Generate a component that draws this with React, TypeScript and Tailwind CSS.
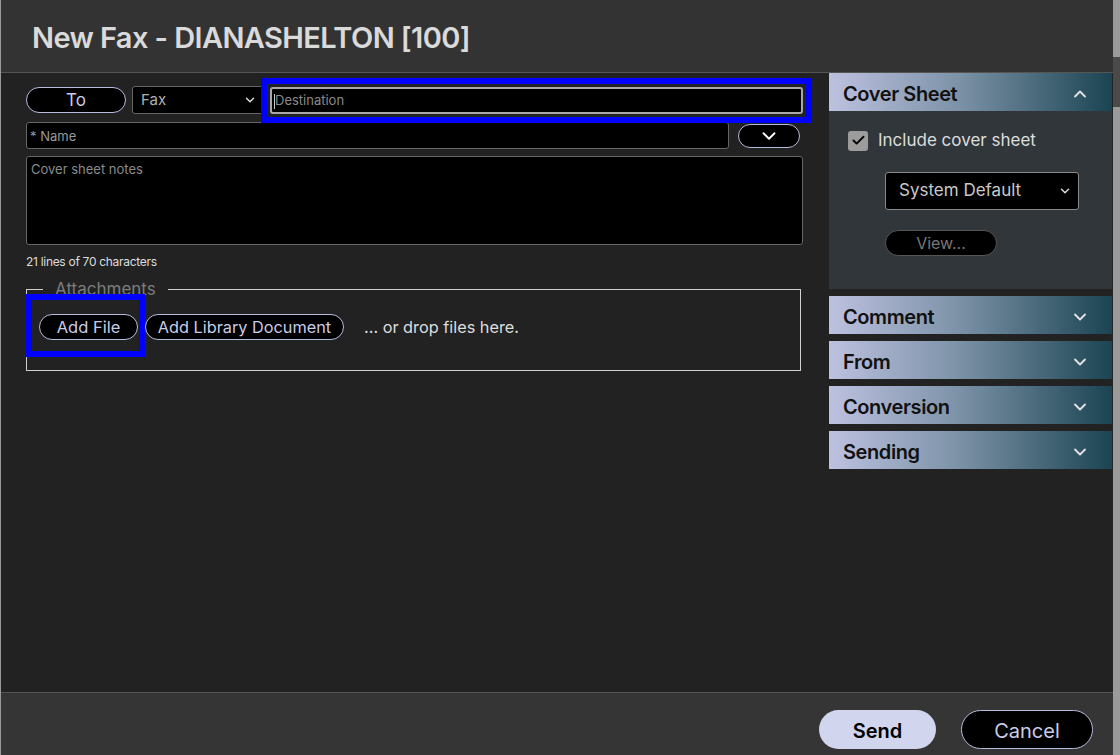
import { ChevronDown, ChevronUp, Check } from "lucide-react";

const sections = ["Comment", "From", "Conversion", "Sending"];

const pill =
  "rounded-full border border-[#b7bbdd] bg-black text-[#c9cce8] leading-none flex items-center justify-center";

function SectionHeader({ label, open }: { label: string; open?: boolean }) {
  return (
    <div className="flex h-[38px] items-center justify-between bg-[linear-gradient(90deg,#bdc1e0_0%,#7d93a8_45%,#1b4452_100%)] pl-[14px] pr-[22px] pt-[3px]">
      <span className="text-[20px] font-semibold tracking-[-0.4px] text-[#111]">{label}</span>
      {open ? (
        <ChevronUp className="h-[20px] w-[20px] text-[#e4e4e4]" strokeWidth={2.2} />
      ) : (
        <ChevronDown className="h-[20px] w-[20px] text-[#e4e4e4]" strokeWidth={2.2} />
      )}
    </div>
  );
}

export default function App() {
  return (
    <div className="flex h-[755px] w-[1120px] overflow-hidden bg-[#222] font-['Inter',sans-serif]">
      <div className="flex flex-1 flex-col border-l border-[#9a9a9a]">
        <header className="flex h-[73px] items-center border-b border-[#555] bg-[#333] pl-[31px] pt-[4px]">
          <h1 className="text-[29px] font-semibold tracking-[-0.6px] text-[#dadada]">
            New Fax - DIANASHELTON [100]
          </h1>
        </header>

        <div className="flex flex-1 pl-[25px]">
          <div className="flex w-[777px] flex-col pt-[13px]">
            <div className="flex h-[28px] items-center gap-[6px]">
              <button className={`${pill} h-[26px] w-[100px] text-[17px]`}>To</button>
              <div className="flex h-[28px] w-[132px] items-center justify-between rounded-[3px] border border-[#666] bg-black pl-[8px] pr-[6px] text-[15px] text-[#b0b0b0]">
                <span>Fax</span>
                <ChevronDown className="h-[14px] w-[14px] text-[#ddd]" strokeWidth={2.5} />
              </div>
              <div className="relative h-[27px] flex-1">
                <div className="absolute -inset-[9px] border-[6px] border-[#0000ff]" />
                <div className="relative flex h-full items-center rounded-[3px] border-2 border-[#a8a8a8] bg-black pl-[2px] pt-[2px] text-[13px] text-[#8a8a8a]">
                  <span className="h-[15px] w-px bg-[#ccc]" />
                  <span>Destination</span>
                </div>
              </div>
            </div>

            <div className="mt-[8px] flex h-[27px] items-center gap-[9px]">
              <div className="flex h-[27px] w-[703px] items-center rounded-[3px] border border-[#666] bg-black pl-[3px] pt-[2px] text-[13px] text-[#999]">
                * Name
              </div>
              <button className={`${pill} h-[24px] w-[62px]`}>
                <ChevronDown className="h-[22px] w-[22px] text-white" strokeWidth={2} />
              </button>
            </div>

            <div className="mt-[7px] h-[89px] rounded-[3px] border border-[#666] bg-black px-[4px] pt-[3px] text-[13px] text-[#8a8a8a]">
              Cover sheet notes
            </div>

            <p className="mt-[8px] text-[12px] tracking-[-0.3px] text-[#ddd]">21 lines of 70 characters</p>

            <fieldset className="mt-[10px] h-[90px] w-[775px] border border-[#cfcfcf] pl-[12px]">
              <legend className="ml-[4px] px-[12px] text-[17px] leading-none text-[#7c7c7c]">Attachments</legend>
              <div className="mt-[16px] flex items-center">
                <div className="relative">
                  <div className="absolute -left-[13px] -top-[20px] h-[63px] w-[119px] border-[6px] border-[#0000ff]" />
                  <button className={`${pill} relative h-[26px] w-[99px] text-[16.5px]`}>Add File</button>
                </div>
                <button className={`${pill} ml-[7px] h-[26px] w-[199px] text-[16.3px]`}>Add Library Document</button>
                <span className="ml-[20px] text-[16.3px] text-[#ddd]">... or drop files here.</span>
              </div>
            </fieldset>
          </div>

          <aside className="ml-[26px] flex w-[283px] flex-col gap-[7px]">
            <div className="flex flex-col">
              <SectionHeader label="Cover Sheet" open />
              <div className="h-[178px] bg-[#30363a] pl-[19px] pt-[17px]">
                <label className="flex items-center gap-[10px]">
                  <span className="flex h-[20px] w-[20px] items-center justify-center rounded-[3px] bg-[#9c9c9c]">
                    <Check className="h-[15px] w-[15px] text-black" strokeWidth={3} />
                  </span>
                  <span className="text-[17px] text-[#ddd]">Include cover sheet</span>
                </label>
                <div className="ml-[37px] mt-[18px] flex h-[38px] w-[194px] items-center justify-between rounded-[3px] border border-[#888] bg-black pl-[13px] pr-[6px] text-[17px] text-[#c8c8c8]">
                  <span>System Default</span>
                  <ChevronDown className="h-[14px] w-[14px] text-[#ddd]" strokeWidth={2.5} />
                </div>
                <button className="ml-[37px] mt-[20px] flex h-[26px] w-[112px] items-center justify-center rounded-full border border-[#555] bg-black text-[16px] text-[#777]">
                  View...
                </button>
              </div>
            </div>
            {sections.map((s) => (
              <SectionHeader key={s} label={s} />
            ))}
          </aside>
        </div>

        <footer className="flex h-[63px] items-start justify-end gap-[25px] border-t border-[#555] bg-[#353535] pr-[20px] pt-[17px]">
          <button className="h-[39px] w-[117px] rounded-full bg-[#d1d5ed] pt-[2px] text-[20px] font-semibold text-black">
            Send
          </button>
          <button className="h-[39px] w-[132px] rounded-full border border-[#b7bbdd] bg-black pt-[2px] text-[20px] text-[#c9cce8]">
            Cancel
          </button>
        </footer>
      </div>

      <div className="flex w-[7px] flex-col bg-[#9a9a9a]">
        <div className="mt-[57px] h-[50px] w-full bg-[#4a4a4a]" />
      </div>
    </div>
  );
}
